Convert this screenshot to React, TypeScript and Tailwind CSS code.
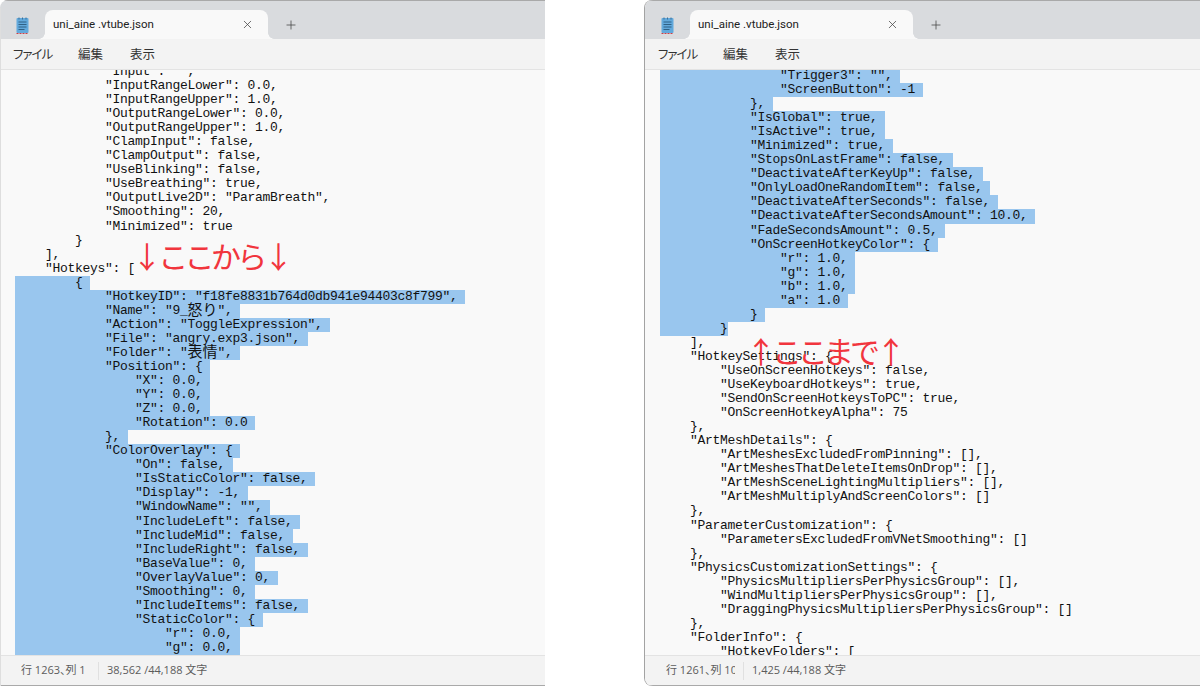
import React from 'react';
import { Plus, X } from 'lucide-react';

const leftLines = [
  '            "Input": "",',
  '            "InputRangeLower": 0.0,',
  '            "InputRangeUpper": 1.0,',
  '            "OutputRangeLower": 0.0,',
  '            "OutputRangeUpper": 1.0,',
  '            "ClampInput": false,',
  '            "ClampOutput": false,',
  '            "UseBlinking": false,',
  '            "UseBreathing": true,',
  '            "OutputLive2D": "ParamBreath",',
  '            "Smoothing": 20,',
  '            "Minimized": true',
  '        }',
  '    ],',
  '    "Hotkeys": [',
  '        {',
  '            "HotkeyID": "f18fe8831b764d0db941e94403c8f799",',
  '            "Name": "9_怒り",',
  '            "Action": "ToggleExpression",',
  '            "File": "angry.exp3.json",',
  '            "Folder": "表情",',
  '            "Position": {',
  '                "X": 0.0,',
  '                "Y": 0.0,',
  '                "Z": 0.0,',
  '                "Rotation": 0.0',
  '            },',
  '            "ColorOverlay": {',
  '                "On": false,',
  '                "IsStaticColor": false,',
  '                "Display": -1,',
  '                "WindowName": "",',
  '                "IncludeLeft": false,',
  '                "IncludeMid": false,',
  '                "IncludeRight": false,',
  '                "BaseValue": 0,',
  '                "OverlayValue": 0,',
  '                "Smoothing": 0,',
  '                "IncludeItems": false,',
  '                "StaticColor": {',
  '                    "r": 0.0,',
  '                    "g": 0.0,',
  '                    "b": 0.0,',
];

const rightLines = [
  '                "Trigger3": "",',
  '                "ScreenButton": -1',
  '            },',
  '            "IsGlobal": true,',
  '            "IsActive": true,',
  '            "Minimized": true,',
  '            "StopsOnLastFrame": false,',
  '            "DeactivateAfterKeyUp": false,',
  '            "OnlyLoadOneRandomItem": false,',
  '            "DeactivateAfterSeconds": false,',
  '            "DeactivateAfterSecondsAmount": 10.0,',
  '            "FadeSecondsAmount": 0.5,',
  '            "OnScreenHotkeyColor": {',
  '                "r": 1.0,',
  '                "g": 1.0,',
  '                "b": 1.0,',
  '                "a": 1.0',
  '            }',
  '        }',
  '    ],',
  '    "HotkeySettings": {',
  '        "UseOnScreenHotkeys": false,',
  '        "UseKeyboardHotkeys": true,',
  '        "SendOnScreenHotkeysToPC": true,',
  '        "OnScreenHotkeyAlpha": 75',
  '    },',
  '    "ArtMeshDetails": {',
  '        "ArtMeshesExcludedFromPinning": [],',
  '        "ArtMeshesThatDeleteItemsOnDrop": [],',
  '        "ArtMeshSceneLightingMultipliers": [],',
  '        "ArtMeshMultiplyAndScreenColors": []',
  '    },',
  '    "ParameterCustomization": {',
  '        "ParametersExcludedFromVNetSmoothing": []',
  '    },',
  '    "PhysicsCustomizationSettings": {',
  '        "PhysicsMultipliersPerPhysicsGroup": [],',
  '        "WindMultipliersPerPhysicsGroup": [],',
  '        "DraggingPhysicsMultipliersPerPhysicsGroup": []',
  '    },',
  '    "FolderInfo": {',
  '        "HotkeyFolders": [',
];

// Japanese runs are full width (two columns), so they get their own size
function LineText({ text }: { text: string }) {
  return (
    <>
      {text.split(/([\u3040-\u9fff]+)/).map((part, i) =>
        i % 2 === 1 ? (
          <span key={i} className="inline-block h-[14.06px] pt-[1px] align-top text-[15px] leading-[14.06px] tracking-normal">
            {part}
          </span>
        ) : (
          part
        ),
      )}
    </>
  );
}

function NotepadIcon() {
  return (
    <svg width="13" height="17" viewBox="0 0 13 17" className="shrink-0">
      <rect x="0.5" y="1" width="12" height="15" rx="1" fill="#62a9dc" />
      <path d="M3 0.5v2M6.5 0.5v2M10 0.5v2" stroke="#3d6f96" strokeWidth="1" />
      <path d="M2.5 5h8M2.5 7.5h8M2.5 10h8M2.5 12.5h6" stroke="#2f6186" strokeWidth="1" />
      <path d="M0.5 16.5h12" stroke="#c8404a" strokeWidth="1" strokeDasharray="2 1" />
    </svg>
  );
}

interface NotepadWindowProps {
  lines: string[];
  selectFrom: number;
  selectTo: number;
  scrollClass: string;
  caret: string;
  count: string;
  frameClass: string;
}

function NotepadWindow({ lines, selectFrom, selectTo, scrollClass, caret, count, frameClass }: NotepadWindowProps) {
  return (
    <div className={`relative flex h-[686px] flex-col overflow-hidden ${frameClass}`}>
      {/* Title bar + tab */}
      <div className="flex h-[39px] shrink-0 items-end border-t border-[#a9a9a9] bg-[#d9dbde]">
        <div className="flex h-[38px] w-[45px] items-center justify-center pr-[1px] pt-[10px]">
          <NotepadIcon />
        </div>
        <div className="relative flex h-[29px] w-[223px] items-center justify-between rounded-t-lg bg-[#f9f9f9] pl-[8px] pr-[14px]">
          <span className="font-['Roboto',sans-serif] text-[11.5px] text-[#222]">uni_aine .vtube.json</span>
          <X size={13} strokeWidth={1.4} className="text-[#444]" />
          <span className="absolute bottom-0 left-[-6px] h-[6px] w-[6px] bg-[radial-gradient(circle_at_0_0,#d9dbde_5.5px,#f9f9f9_6px)]" />
          <span className="absolute bottom-0 right-[-6px] h-[6px] w-[6px] bg-[radial-gradient(circle_at_100%_0,#d9dbde_5.5px,#f9f9f9_6px)]" />
        </div>
        <div className="flex h-[29px] w-[46px] items-center justify-center">
          <Plus size={14} strokeWidth={1.3} className="text-[#444]" />
        </div>
      </div>

      {/* Menu */}
      <div className="flex h-[31px] shrink-0 items-center border-b border-[#e3e3e3] bg-[#f3f3f3] pl-[13px] pt-[1px] font-['Noto_Sans_CJK_JP',sans-serif] text-[12.5px] text-[#333] [font-feature-settings:'palt']">
        <span className="w-[65px] tracking-[-1px]">ファイル</span>
        <span className="w-[52px]">編集</span>
        <span>表示</span>
      </div>

      {/* Text area */}
      <div className="min-h-0 flex-1 overflow-hidden bg-[#f9f9f9] pl-[15px] font-['Liberation_Mono','Noto_Sans_CJK_JP',monospace] text-[13px] tracking-[-0.3px] text-[#111]">
        <div className={scrollClass}>
          {lines.map((line, i) => {
            const selected = i >= selectFrom && i <= selectTo;
            return (
              <div key={i} className="h-[14.06px] whitespace-pre leading-[14.06px]">
                <span className={selected ? 'inline-block h-[14.06px] bg-[#99c6ee] align-top' : 'inline-block h-[14.06px] align-top'}>
                  <LineText text={selected && i < selectTo ? line + ' ' : line} />
                </span>
              </div>
            );
          })}
        </div>
      </div>

      {/* Status bar */}
      <div className="flex h-[31px] shrink-0 items-center border-y border-t-[#e3e3e3] border-b-[#a9a9a9] bg-[#f3f3f3] font-['Open_Sans','Noto_Sans_CJK_JP',sans-serif] text-[11px] text-[#5c5c5c] [font-feature-settings:'palt']">
        <div className="ml-[21px] w-[69px] overflow-hidden whitespace-nowrap">{caret}</div>
        <div className="ml-[8px] h-[18px] w-px bg-[#e0e0e0]" />
        <div className="ml-[8px] whitespace-nowrap">{count}</div>
      </div>
    </div>
  );
}

export default function App() {
  return (
    <div className="relative flex h-[686px] w-[1200px] overflow-hidden bg-white">
      <div className="w-[545px] shrink-0">
        <NotepadWindow
          lines={leftLines}
          selectFrom={15}
          selectTo={42}
          scrollClass="-mt-[5px]"
          caret="行 1263、列 1"
          count="38,562 /44,188 文字"
          frameClass="rounded-tl-lg"
        />
      </div>
      <div className="ml-[100px] w-[555px] shrink-0 rounded-l-lg shadow-[-1px_0_0_#a3a3a3]">
        <NotepadWindow
          lines={rightLines}
          selectFrom={0}
          selectTo={18}
          scrollClass="-mt-[1px]"
          caret="行 1261、列 10"
          count="1,425 /44,188 文字"
          frameClass="rounded-l-lg"
        />
      </div>

      {/* Left edge of the first window */}
      <div className="absolute bottom-0 left-0 top-[8px] w-px bg-[#dedede]" />

      {/* Red notes written over the screenshot */}
      <div className="absolute left-[132px] top-[232px] whitespace-nowrap font-['Noto_Sans_CJK_JP',sans-serif] text-[30px] leading-[46px] tracking-[-3.7px] text-[#f1353d]">
        ↓ここから↓
      </div>
      <div className="absolute left-[746px] top-[327px] whitespace-nowrap font-['Noto_Sans_CJK_JP',sans-serif] text-[30px] leading-[46px] tracking-[-4px] text-[#f1353d]">
        ↑ここまで↑
      </div>
    </div>
  );
}
